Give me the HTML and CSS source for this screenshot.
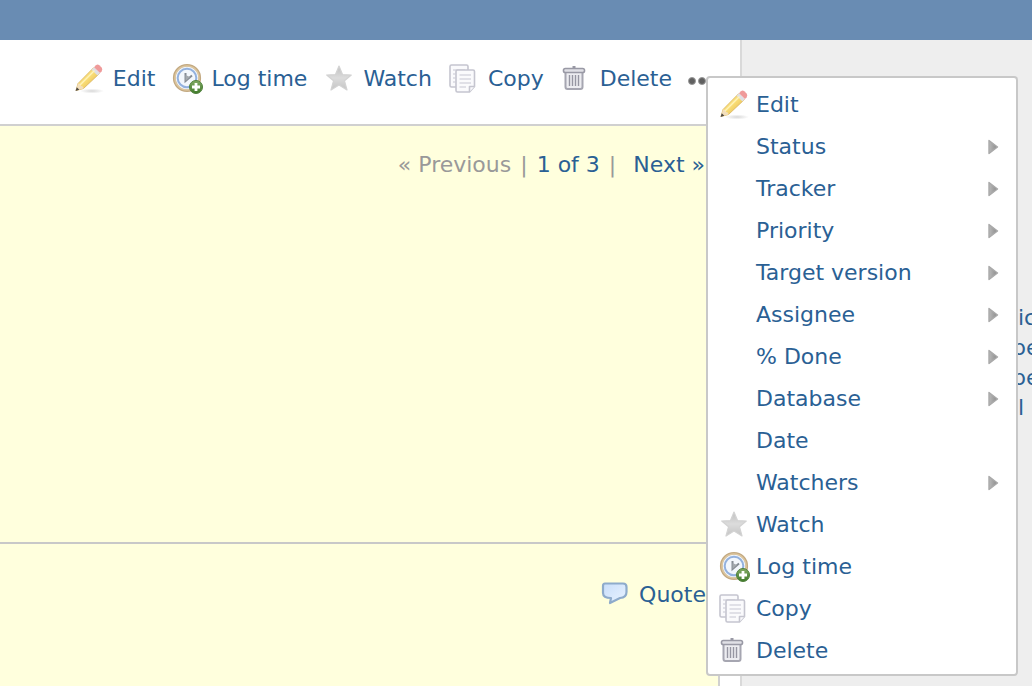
FILE: index.html
```html
<!DOCTYPE html>
<html lang="en">
<head>
<meta charset="utf-8">
<title>Issue</title>
<link rel="stylesheet" href="styles.css">
</head>
<body>
<svg class="defs" aria-hidden="true">
  <defs>
    <linearGradient id="g-star" x1="0" y1="0" x2="0" y2="1"><stop offset="0" stop-color="#bfbfbf"/><stop offset=".5" stop-color="#dcdcdc"/><stop offset="1" stop-color="#c4c4c4"/></linearGradient>
    <linearGradient id="g-pen" x1="0" y1="0" x2="1" y2="1"><stop offset="0" stop-color="#fbea9c"/><stop offset=".5" stop-color="#f8dc75"/><stop offset="1" stop-color="#dda63f"/></linearGradient>
    <linearGradient id="g-arrow" x1="0" y1="0" x2="1" y2="0"><stop offset="0" stop-color="#b9b9b9"/><stop offset="1" stop-color="#8a8a8a"/></linearGradient>
    <linearGradient id="g-bubble" x1="0" y1="0" x2="1" y2="1"><stop offset="0" stop-color="#c9defa"/><stop offset="1" stop-color="#e9f3ff"/></linearGradient>
    <linearGradient id="g-plus" x1="0" y1="0" x2="0" y2="1"><stop offset="0" stop-color="#84ab66"/><stop offset="1" stop-color="#3f7a2a"/></linearGradient>
    <radialGradient id="g-shadow"><stop offset="0" stop-color="#d8d8d8"/><stop offset="1" stop-color="#d8d8d8" stop-opacity="0"/></radialGradient>
  </defs>
  <symbol id="i-edit" viewBox="0 0 32 32">
    <ellipse cx="19" cy="28" rx="12" ry="2.500" fill="url(#g-shadow)"/>
    <path d="M3 27.500 5 20.500 20.500 4.800 26.500 10.500 10.500 25.500Z" fill="url(#g-pen)" stroke="#d9b45c" stroke-width=".8"/>
    <path d="M3 27.500 5 20.500Q8 20.500 8 23 10.500 23 10.500 25.500Z" fill="#f3dfbd"/>
    <path d="M2.500 28 3.800 24.200 6.300 26.700Z" fill="#4f4a44"/>
    <path d="M18.500 6.800 21 4.300 27 10 24.500 12.400Z" fill="#dfdfe4"/>
    <path d="M21 4.300 23 2.300Q24.500 1 26.300 2.200L28.600 4.500Q30 6.300 28.700 8.200L27 10Z" fill="#ef9a9a"/>
    <path d="M7 22 21.500 7.500" stroke="#fff3b8" stroke-width="1.500"/>
  </symbol>
  <symbol id="i-time" viewBox="0 0 32 32">
    <circle cx="16" cy="15" r="12.800" fill="#eef4fc" stroke="#c3a981" stroke-width="2.600"/>
    <circle cx="16" cy="15" r="12" fill="none" stroke="#dcc69f" stroke-width="1.600"/>
    <circle cx="16" cy="15" r="9.300" fill="#f3f7fc" stroke="#93b1de" stroke-width="2"/>
    <path d="M14.500 10V18L21 12.500" fill="none" stroke="#858c94" stroke-width="2"/>
    <path d="M14.500 12V18L19 14Z" fill="#a4a9ae"/>
    <circle cx="25" cy="24" r="6.500" fill="url(#g-plus)" stroke="#4f803b"/>
    <path d="M25 20V28M21 24H29" stroke="#fff" stroke-width="2.800"/>
  </symbol>
  <symbol id="i-watch" viewBox="0 0 32 32">
    <path d="M16 3 19.500 11.500 28.300 12 21.500 17.800 24 27 16 22 8 27 10.500 17.800 3.700 12 12.500 11.500Z" fill="url(#g-star)" stroke="#d3d3d3" stroke-width="1.200" stroke-linejoin="round"/>
  </symbol>
  <symbol id="i-copy" viewBox="0 0 32 32">
    <g fill="#fafafc" stroke="#c5c5cf" stroke-width="1.600" stroke-linejoin="round">
      <rect x="2" y="2" width="18" height="22" rx="1.500"/>
      <path d="M5 7H17M5 11H7.500M5 15H7.500M5 19H7.500" stroke="#d8d8df"/>
      <path d="M9.500 7H25Q26.500 7 26.500 8.500V23.500L21.500 29H9.500Q8 29 8 27.500V8.500Q8 7 9.500 7Z"/>
      <path d="M26.500 23.500H21.500V29"/>
      <path d="M11.500 12H23M11.500 16H23M11.500 20H23M11.500 24H18" stroke="#d8d8df"/>
    </g>
  </symbol>
  <symbol id="i-delete" viewBox="0 0 32 32">
    <rect x="12.500" y="3" width="3" height="3" fill="#9999a5"/>
    <path d="M5.500 9V24Q5.500 26 7.500 26H20.500Q22.500 26 22.500 24V9Z" fill="#ededf1" stroke="#a6a6b1" stroke-width="2"/>
    <rect x="3.500" y="5.500" width="21" height="4" rx="1.800" fill="#e0e0e6" stroke="#9999a5" stroke-width="1.600"/>
    <path d="M9.500 12V23M12.500 12V23M15.500 12V23M18.500 12V23" stroke="#9696a2" stroke-width="1.400"/>
  </symbol>
  <symbol id="i-quote" viewBox="0 0 32 32">
    <path d="M6 4.500H24Q27.500 4.500 27.500 8V13Q27.500 18.500 21 19L11 24 12 19Q4 19 4 14V7Q4 4.500 6 4.500Z" fill="url(#g-bubble)" stroke="#8eabcb" stroke-width="2.200" stroke-linejoin="round"/>
  </symbol>
  <symbol id="i-arrow" viewBox="0 0 14 18">
    <path d="M3 2.500V15.500L11.500 9Z" fill="url(#g-arrow)" stroke="#a9a9a9" stroke-width="1.400" stroke-linejoin="round"/>
  </symbol>
</svg>

<header class="topbar"></header>
<div class="page">
  <main class="content">
    <nav class="toolbar" aria-label="Issue actions">
      <a class="action" href="#"><svg class="icon"><use href="#i-edit"/></svg>Edit</a>
      <a class="action" href="#"><svg class="icon"><use href="#i-time"/></svg>Log time</a>
      <a class="action" href="#"><svg class="icon"><use href="#i-watch"/></svg>Watch</a>
      <a class="action" href="#"><svg class="icon"><use href="#i-copy"/></svg>Copy</a>
      <a class="action" href="#"><svg class="icon"><use href="#i-delete"/></svg>Delete</a>
      <button class="more" type="button" aria-label="More actions"><span class="dot"></span><span class="dot"></span><span class="dot"></span></button>
    </nav>
    <article class="issue">
      <section class="details">
        <div class="pager"><span>« Previous</span><span>|</span><a href="#">1 of 3</a><span>|</span><a class="next" href="#">Next »</a></div>
      </section>
      <section class="description">
        <a class="action" href="#"><svg class="icon"><use href="#i-quote"/></svg>Quote</a>
      </section>
    </article>
  </main>
  <aside class="sidebar">
    <a class="side-link" href="#">ic</a>
    <a class="side-link word-end" href="#">pe</a>
    <a class="side-link word-end" href="#">pe</a>
    <a class="side-link" href="#">l</a>
  </aside>
</div>

<ul class="menu">
  <li><a class="item" href="#"><svg class="icon"><use href="#i-edit"/></svg><span class="label">Edit</span></a></li>
  <li><a class="item" href="#"><span class="icon"></span><span class="label">Status</span><svg class="arrow"><use href="#i-arrow"/></svg></a></li>
  <li><a class="item" href="#"><span class="icon"></span><span class="label">Tracker</span><svg class="arrow"><use href="#i-arrow"/></svg></a></li>
  <li><a class="item" href="#"><span class="icon"></span><span class="label">Priority</span><svg class="arrow"><use href="#i-arrow"/></svg></a></li>
  <li><a class="item" href="#"><span class="icon"></span><span class="label">Target version</span><svg class="arrow"><use href="#i-arrow"/></svg></a></li>
  <li><a class="item" href="#"><span class="icon"></span><span class="label">Assignee</span><svg class="arrow"><use href="#i-arrow"/></svg></a></li>
  <li><a class="item" href="#"><span class="icon"></span><span class="label">% Done</span><svg class="arrow"><use href="#i-arrow"/></svg></a></li>
  <li><a class="item" href="#"><span class="icon"></span><span class="label">Database</span><svg class="arrow"><use href="#i-arrow"/></svg></a></li>
  <li><a class="item" href="#"><span class="icon"></span><span class="label">Date</span></a></li>
  <li><a class="item" href="#"><span class="icon"></span><span class="label">Watchers</span><svg class="arrow"><use href="#i-arrow"/></svg></a></li>
  <li><a class="item" href="#"><svg class="icon"><use href="#i-watch"/></svg><span class="label">Watch</span></a></li>
  <li><a class="item" href="#"><svg class="icon"><use href="#i-time"/></svg><span class="label">Log time</span></a></li>
  <li><a class="item" href="#"><svg class="icon"><use href="#i-copy"/></svg><span class="label">Copy</span></a></li>
  <li><a class="item" href="#"><svg class="icon"><use href="#i-delete"/></svg><span class="label">Delete</span></a></li>
</ul>
</body>
</html>
```
FILE: styles.css
```css
* { box-sizing: border-box; }

body {
  position: relative;
  display: flex;
  flex-direction: column;
  min-height: 100vh;
  margin: 0;
  overflow: hidden;
  background: #fff;
  color: #999;
  font-family: Verdana, "DejaVu Sans", sans-serif;
  font-size: 22px;
  line-height: 28px;
}

a { color: #2a6094; text-decoration: none; }

.defs { position: absolute; width: 0; height: 0; }

.topbar { height: 40px; background: #698cb3; }

.page { display: flex; flex: 1; }

.content {
  display: flex;
  flex: 1;
  flex-direction: column;
  min-width: 0;
  padding-right: 20px;
}

.toolbar {
  display: flex;
  justify-content: flex-end;
  align-items: center;
  gap: 16px;
  padding: 18px 0 24px;
}

.icon { flex: none; width: 32px; height: 32px; }

.action {
  display: flex;
  align-items: center;
  gap: 8px;
  height: 42px;
  white-space: nowrap;
}

.more {
  display: flex;
  align-items: center;
  gap: 2px;
  width: 32px;
  height: 42px;
  padding: 4px 0 0;
  border: 0;
  background: none;
}

.dot { width: 8px; height: 8px; border: 1px solid #999; border-radius: 4px; background: #606060; }

.issue {
  display: flex;
  flex: 1;
  flex-direction: column;
  border: solid #d0d0d0;
  border-width: 2px 2px 0 0;
  background: #ffffdd;
}

.details {
  min-height: 418px;
  padding: 25px 13px;
  border-bottom: 2px solid #c8c8c8;
}

.pager { display: flex; justify-content: flex-end; gap: 9px; }
.next { padding-left: 8px; }

.description {
  display: flex;
  justify-content: flex-end;
  padding: 30px 12px;
}

.sidebar {
  display: flex;
  flex-direction: column;
  width: 292px;
  padding-top: 263px;
  border-left: 2px solid #d9d9d9;
  background: #eee;
}

.side-link { padding-left: 276px; line-height: 30px; white-space: nowrap; }
.word-end { padding-left: 270px; }

.menu {
  position: absolute;
  top: 76px;
  right: 14px;
  width: 312px;
  margin: 0;
  padding: 6px 0 2px;
  border: 2px solid #c8c8c8;
  border-radius: 4px;
  background: #fff;
  list-style: none;
}

.item {
  display: flex;
  align-items: center;
  gap: 6px;
  height: 42px;
  padding: 0 16px 0 10px;
}

.label { flex: 1; }

.arrow { width: 14px; height: 18px; }
```
